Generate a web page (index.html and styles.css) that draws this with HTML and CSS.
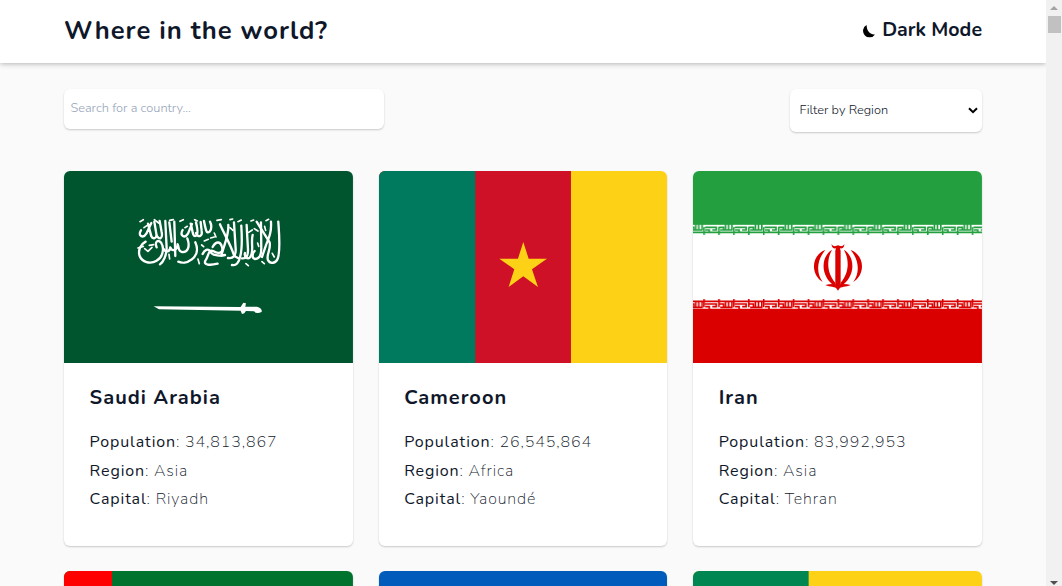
FILE: index.html
```html
<!DOCTYPE html>
<html lang="en">
<head>
<meta charset="utf-8">
<title>Where in the world?</title>
<link rel="stylesheet" href="styles.css">
</head>
<body>
<div class="app">
  <div class="page">
    <header class="nav">
      <h1 class="nav-title">Where in the world?</h1>
      <button class="mode" type="button">
        <svg class="mode-icon" viewBox="0 0 36 36"><path d="M13 0A18 18 0 1 0 36 26C24 28 12 16 13 0Z"/></svg>
        <span>Dark Mode</span>
      </button>
    </header>
    <main class="main">
      <div class="filters">
        <input class="search" type="text" placeholder="Search for a country...">
        <div class="select">
          <span>Filter by Region</span>
          <svg class="chevron" viewBox="0 0 10 7"><path d="M1 1.2L5 5.2L9 1.2"/></svg>
        </div>
      </div>
      <div class="grid">
        <article class="card">
          <svg class="flag" viewBox="0 0 867 576" preserveAspectRatio="none">
            <rect width="867" height="576" fill="#00542e"/>
            <g transform="translate(180 104)" fill="none" stroke="#fff" stroke-linecap="round" stroke-linejoin="round">
              <g stroke-width="7">
                <path d="M463 48C466 90 470 130 462 157C456 174 438 176 432 163C426 148 442 130 437 110L398 48"/>
                <path d="M441 48C443 76 437 92 427 116L414 154"/>
                <path d="M411 50L412 128C412 150 404 160 393 160C382 158 386 140 392 136"/>
                <path d="M368 58L372 130C373 152 366 160 354 158"/>
                <path d="M386 88C380 112 391 138 379 154C371 165 360 152 363 142"/>
                <path d="M352 60C354 96 356 126 349 151C345 172 336 181 324 178"/>
                <path d="M288 56C300 84 318 112 331 151L342 157"/>
                <path d="M313 58C315 88 302 112 292 150"/>
                <path d="M330 50L335 128C337 150 327 160 312 157"/>
                <path d="M266 124C276 106 289 106 294 124C300 142 282 146 269 137C252 128 254 154 244 165C238 178 257 180 281 174"/>
                <path d="M236 145C241 133 253 125 260 140C268 151 291 151 303 148"/>
                <path d="M214 110C224 132 218 151 202 162C190 172 174 173 163 168"/>
                <path d="M190 98C200 125 190 141 174 139C162 138 165 122 161 116C159 136 144 138 139 125C137 142 123 139 119 130"/>
                <path d="M98 125C91 107 103 100 112 112C122 129 116 156 98 165C78 177 54 169 47 151C41 133 51 115 65 108"/>
                <path d="M51 74C40 90 57 100 67 84L82 52M72 54L82 92C86 101 96 99 98 90L91 48"/>
                <path d="M98 90C107 105 117 98 113 79L107 46M124 46L128 127C128 148 118 169 108 176"/>
                <path d="M151 48L154 151M136 50L143 108"/>
                <path d="M176 73C166 91 183 99 192 84L204 55M200 54C206 71 205 94 215 91C225 88 220 66 216 50"/>
                <path d="M216 82C223 99 236 91 233 75L230 49M240 46C245 71 247 86 257 78C265 70 262 55 258 48"/>
              </g>
              <g stroke-width="5">
                <path d="M48 48L58 42M60 66L70 59M91 42L104 52M168 47L178 42M183 66L190 62M212 42L220 46M279 44L292 42M318 42L326 40M342 48L352 43M381 46L389 43M426 45L434 41"/>
                <path d="M42 127L58 122M62 129L72 137L84 125M76 119L89 117M135 146L137 160M137 44L148 42M222 160L226 174M241 106L253 101M260 97L271 94M271 82L276 94M318 66L327 74M374 80L385 73M391 69L402 76M401 112L404 122M422 62L425 74M445 143L451 154M366 174L373 180M414 168L421 174M233 118L239 123"/>
              </g>
              <path d="M89 302L350 304L358 291L366 293L364 303L399 303Q416 308 413 319Q398 326 390 317L366 316L361 323L354 325L350 315L105 311Z" fill="#fff" stroke="none"/>
            </g>
          </svg>
          <div class="info">
            <h2 class="name">Saudi Arabia</h2>
            <p class="row"><b class="key">Population</b>: 34,813,867</p>
            <p class="row"><b class="key">Region</b>: Asia</p>
            <p class="row"><b class="key">Capital</b>: Riyadh</p>
          </div>
        </article>
        <article class="card">
          <svg class="flag" viewBox="0 0 867 576" preserveAspectRatio="none">
            <rect width="867" height="576" fill="#fcd116"/>
            <rect width="576" height="576" fill="#ce1126"/>
            <rect width="289" height="576" fill="#007a5e"/>
            <path transform="translate(304 177)" fill="#fcd116" d="M129 36L145 86H200L155 118L173 171L129 139L85 171L102 118L57 86H113Z"/>
          </svg>
          <div class="info">
            <h2 class="name">Cameroon</h2>
            <p class="row"><b class="key">Population</b>: 26,545,864</p>
            <p class="row"><b class="key">Region</b>: Africa</p>
            <p class="row"><b class="key">Capital</b>: Yaoundé</p>
          </div>
        </article>
        <article class="card">
          <svg class="flag" viewBox="0 0 867 576" preserveAspectRatio="none">
            <defs>
              <pattern id="kufic-green" x="31" y="159" width="89.5" height="33" patternUnits="userSpaceOnUse">
                <path d="M0 0H90M0 25H90M2 10V33M47 10V33M5 10H39V18H27M6 18H18V25M46 10H61V18M51 18H88M67 0V18M76 0V18M86 0V18" fill="none" stroke="#239f40" stroke-width="5"/>
              </pattern>
              <pattern id="kufic-red" x="31" y="384" width="89.5" height="33" patternUnits="userSpaceOnUse">
                <path d="M0 7H90M0 32H90M2 0V25M47 0V25M5 15H39V23H27M6 23H18V31M46 15H61V23M51 25H88M67 7V25M76 7V25M86 7V25" fill="none" stroke="#da0000" stroke-width="5"/>
              </pattern>
            </defs>
            <rect width="867" height="576" fill="#fff"/>
            <rect width="867" height="160" fill="#239f40"/>
            <rect y="159" width="867" height="33" fill="url(#kufic-green)"/>
            <rect y="384" width="867" height="33" fill="url(#kufic-red)"/>
            <rect y="416" width="867" height="160" fill="#da0000"/>
            <g transform="translate(345 201)" fill="#da0000">
              <path d="M71 18C75 27 84 25 90 22C96 25 105 27 109 18C110 29 102 33 96 31L98 38V146L90 158L82 146V38L84 31C78 33 70 29 71 18Z"/>
              <path d="M52 36C8 52 8 110 44 132C24 106 26 66 52 36Z"/>
              <path d="M128 36C172 52 172 110 136 132C156 106 154 66 128 36Z"/>
              <path d="M72 35C35 59 39 119 82 145V134C58 107 54 69 72 35Z"/>
              <path d="M108 35C145 59 141 119 98 145V134C122 107 126 69 108 35Z"/>
              <path d="M52 141C67 138 79 137 90 141C101 137 113 138 128 141C113 148 100 145 90 153C80 145 67 148 52 141Z"/>
            </g>
          </svg>
          <div class="info">
            <h2 class="name">Iran</h2>
            <p class="row"><b class="key">Population</b>: 83,992,953</p>
            <p class="row"><b class="key">Region</b>: Asia</p>
            <p class="row"><b class="key">Capital</b>: Tehran</p>
          </div>
        </article>
        <article class="card">
          <svg class="flag" viewBox="0 0 867 576" preserveAspectRatio="none"><rect width="867" height="576" fill="#00732f"/><rect width="144" height="576" fill="#f00"/></svg>
        </article>
        <article class="card">
          <svg class="flag" viewBox="0 0 867 576" preserveAspectRatio="none"><rect width="867" height="576" fill="#005bbb"/></svg>
        </article>
        <article class="card">
          <svg class="flag" viewBox="0 0 867 576" preserveAspectRatio="none"><rect width="867" height="576" fill="#fcd116"/><rect width="347" height="576" fill="#008751"/></svg>
        </article>
      </div>
    </main>
  </div>
  <aside class="scrollbar">
    <div class="scroll-top">
      <svg class="arrow" viewBox="0 0 8 4"><path d="M0 4L4 0L8 4Z" fill="#a3a3a3"/></svg>
      <div class="thumb"></div>
    </div>
    <svg class="arrow" viewBox="0 0 8 4"><path d="M0 0H8L4 4Z" fill="#505050"/></svg>
  </aside>
</div>
</body>
</html>
```
FILE: styles.css
```css
* { box-sizing: border-box; margin: 0; padding: 0; }
body {
  height: 100vh;
  overflow: hidden;
  font-family: Nunito, Lato, sans-serif;
  font-weight: 300;
  color: #0f172a;
  background: #fafafa;
}
.app { display: grid; grid-template-columns: minmax(0, 1fr) 16px; height: 100vh; }
.page { height: 100vh; overflow: hidden; }
.nav {
  display: flex;
  justify-content: space-between;
  align-items: center;
  height: 63px;
  padding: 0 64px 3px;
  background: #fff;
  box-shadow: 0 1px 5px rgba(0, 0, 0, 0.28);
}
.nav-title { font-size: 25.6px; font-weight: 700; letter-spacing: 1px; }
.mode {
  display: flex;
  align-items: center;
  gap: 7px;
  margin-bottom: 1px;
  border: 0;
  background: none;
  font: 700 19.6px Nunito, Lato, sans-serif;
  color: inherit;
}
.mode-icon { width: 13px; height: 13px; margin-top: 3px; fill: #000; }
.main { padding: 26px 64px 0; }
.filters { display: flex; justify-content: space-between; align-items: flex-start; margin-bottom: 39px; }
.search, .select {
  border: 0;
  border-radius: 6px;
  background: #fff;
  box-shadow: 0 1px 2px rgba(0, 0, 0, 0.2);
  font: 300 12.8px Nunito, Lato, sans-serif;
}
.search { width: 320px; height: 40px; padding: 0 6.4px 2px; }
.search::placeholder { color: #94a3b8; opacity: 1; }
.select {
  display: flex;
  align-items: center;
  justify-content: space-between;
  width: 192px;
  height: 43px;
  padding: 0 4px 1px 9.6px;
}
.chevron { width: 10px; height: 7px; fill: none; stroke: #000; stroke-width: 2; }
.grid { display: grid; grid-template-columns: repeat(3, minmax(0, 1fr)); gap: 25px 25.6px; }
.card {
  height: 375px;
  overflow: hidden;
  border-radius: 6px;
  background: #fff;
  box-shadow: 0 1px 2px rgba(0, 0, 0, 0.2);
}
.flag { display: block; width: 100%; height: 192px; }
.info { padding: 21px 25.6px; letter-spacing: 0.88px; }
.name { margin-bottom: 17px; font-size: 20px; line-height: 27px; font-weight: 700; letter-spacing: 1px; }
.row { font-size: 16px; line-height: 28.5px; font-weight: 200; }
.key { font-weight: 450; }
.scrollbar {
  display: flex;
  flex-direction: column;
  justify-content: space-between;
  align-items: center;
  padding: 6px 0 1px;
  background: #f1f1f1;
}
.scroll-top { display: flex; flex-direction: column; align-items: center; gap: 6px; }
.arrow { display: block; width: 8px; height: 4px; }
.thumb { width: 13px; height: 17px; background: #c1c1c1; }
```
